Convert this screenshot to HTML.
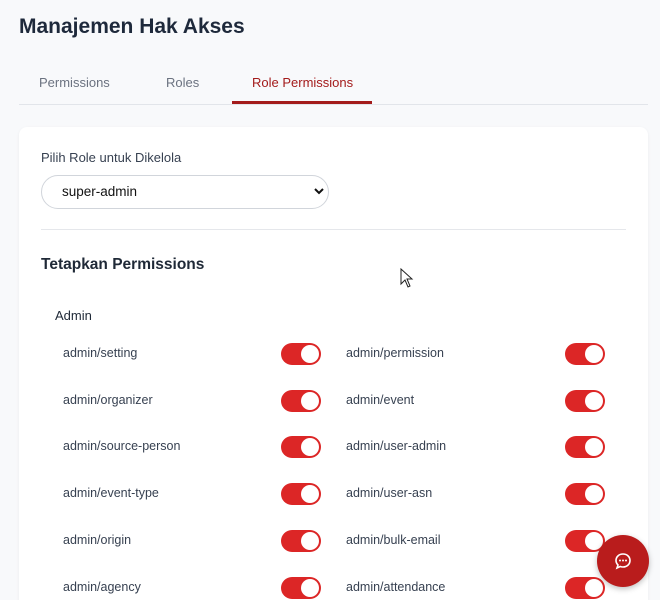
<!DOCTYPE html>
<html><head><style>
*{box-sizing:border-box;margin:0;padding:0}
html,body{width:660px;height:600px;overflow:hidden}
body{background:#f8f9fb;font-family:"Liberation Sans",sans-serif;color:#1f2937;position:relative}
h1{position:absolute;left:19px;top:15px;font-size:21px;font-weight:bold;color:#1e293b}
.tabs{position:absolute;left:19px;top:62px;width:629px;height:43px;border-bottom:1px solid #e2e5ea}
.tab{position:absolute;top:13px;font-size:13px;color:#6b7280}
.act{color:#a31b1b}
.ul{position:absolute;left:213px;top:39px;width:140px;height:3px;background:#a31b1b}
.card{position:absolute;left:19px;top:127px;width:629px;height:500px;background:#fff;border-radius:8px;box-shadow:0 1px 3px rgba(0,0,0,.06)}
.lbl{position:absolute;left:41px;top:150px;font-size:13px;color:#374151}
.sel{position:absolute;left:41px;top:175px;width:288px;height:34px;border:1px solid #d1d5db;border-radius:17px;font-size:13.5px;padding:8px 0 0 20px;color:#111}
.sel svg{position:absolute;right:4px;top:11px}
.hr{position:absolute;left:41px;top:229px;width:585px;height:1px;background:#e5e7eb}
h2{position:absolute;left:41px;top:256px;font-size:15.5px;font-weight:bold;color:#1f2937}
.grp{position:absolute;left:55px;top:308px;font-size:13px;color:#1f2937}
.it{position:absolute;font-size:12.5px;color:#374151}
.tg{position:absolute;width:40px;height:22px;border-radius:11px;background:#dc2626}
.tg::after{content:"";position:absolute;right:2px;top:2px;width:18px;height:18px;border-radius:50%;background:#fff}
.fab{position:absolute;left:597px;top:535px;width:52px;height:52px;border-radius:50%;background:#b91c1c;box-shadow:0 2px 6px rgba(0,0,0,.25)}
</style></head><body>
<h1>Manajemen Hak Akses</h1>
<div class="tabs">
<div class="tab" style="left:20px">Permissions</div>
<div class="tab" style="left:147px">Roles</div>
<div class="tab act" style="left:233px">Role Permissions</div>
<div class="ul"></div>
</div>
<div class="card"></div>
<div class="lbl">Pilih Role untuk Dikelola</div>
<div class="sel">super-admin<svg width="10" height="8" viewBox="0 0 10 8"><path d="M1 2l4 4 4-4" stroke="#111" stroke-width="2" fill="none"/></svg></div>
<div class="hr"></div>
<h2>Tetapkan Permissions</h2>
<svg style="position:absolute;left:400px;top:268px" width="14" height="20" viewBox="0 0 14 20"><path d="M1 1v15l4-4 3 7 2-1-3-7h5z" fill="#fff" stroke="#222" stroke-width="1"/></svg>
<div class="grp">Admin</div>
<div class="it" style="left:63px;top:346px">admin/setting</div><div class="tg" style="left:281px;top:343px"></div>
<div class="it" style="left:346px;top:346px">admin/permission</div><div class="tg" style="left:565px;top:343px"></div>
<div class="it" style="left:63px;top:393px">admin/organizer</div><div class="tg" style="left:281px;top:390px"></div>
<div class="it" style="left:346px;top:393px">admin/event</div><div class="tg" style="left:565px;top:390px"></div>
<div class="it" style="left:63px;top:439px">admin/source-person</div><div class="tg" style="left:281px;top:436px"></div>
<div class="it" style="left:346px;top:439px">admin/user-admin</div><div class="tg" style="left:565px;top:436px"></div>
<div class="it" style="left:63px;top:486px">admin/event-type</div><div class="tg" style="left:281px;top:483px"></div>
<div class="it" style="left:346px;top:486px">admin/user-asn</div><div class="tg" style="left:565px;top:483px"></div>
<div class="it" style="left:63px;top:533px">admin/origin</div><div class="tg" style="left:281px;top:530px"></div>
<div class="it" style="left:346px;top:533px">admin/bulk-email</div><div class="tg" style="left:565px;top:530px"></div>
<div class="it" style="left:63px;top:580px">admin/agency</div><div class="tg" style="left:281px;top:577px"></div>
<div class="it" style="left:346px;top:580px">admin/attendance</div><div class="tg" style="left:565px;top:577px"></div>
<div class="fab"><svg style="position:absolute;left:16px;top:16px" width="20" height="20" viewBox="0 0 20 20"><path d="M10 3c4 0 7 2.8 7 6.5S14 16 10 16c-1 0-2-.2-2.8-.5L4 17l1-3C3.8 12.8 3 11.2 3 9.5 3 5.8 6 3 10 3z" fill="none" stroke="#fff" stroke-width="1.6"/><circle cx="7" cy="9.5" r="1" fill="#fff"/><circle cx="10" cy="9.5" r="1" fill="#fff"/><circle cx="13" cy="9.5" r="1" fill="#fff"/></svg></div>
</body></html>
